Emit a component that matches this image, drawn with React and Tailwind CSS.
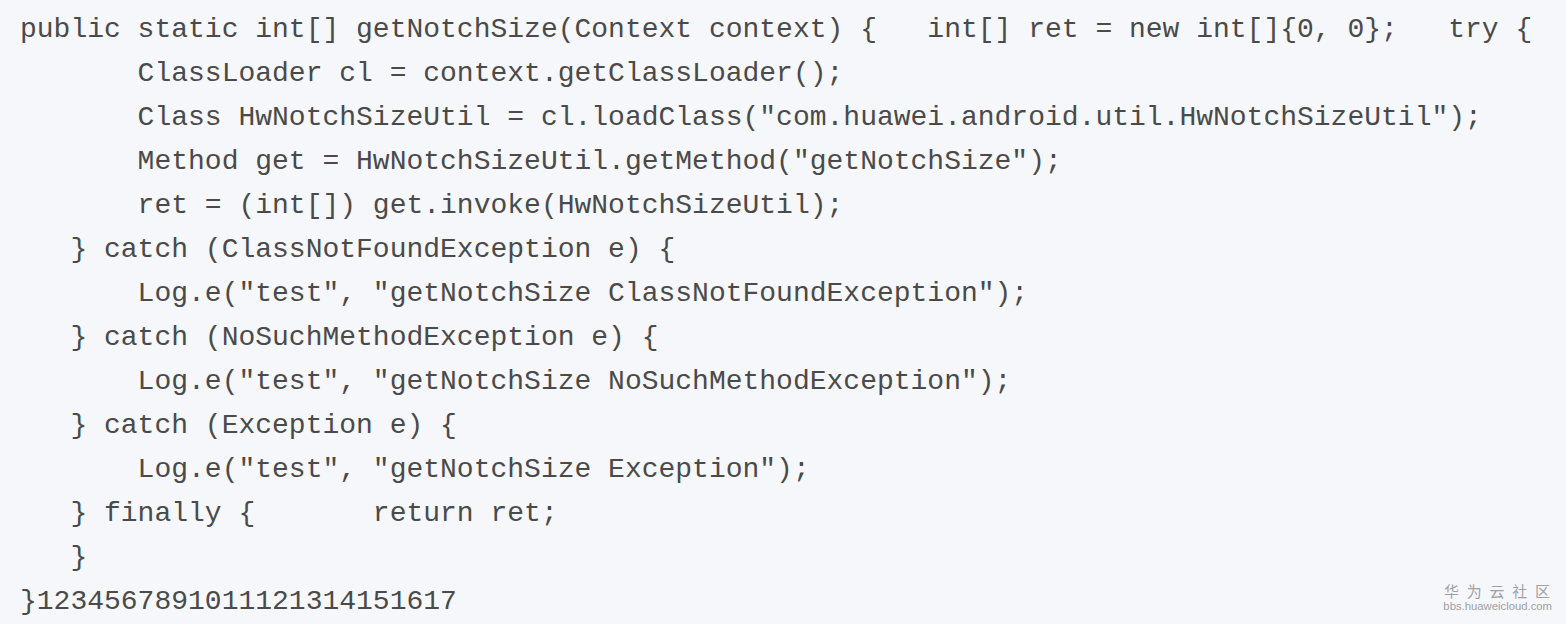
export default function App() {
  const lines = [
    "public static int[] getNotchSize(Context context) {   int[] ret = new int[]{0, 0};   try {",
    "       ClassLoader cl = context.getClassLoader();",
    "       Class HwNotchSizeUtil = cl.loadClass(\"com.huawei.android.util.HwNotchSizeUtil\");",
    "       Method get = HwNotchSizeUtil.getMethod(\"getNotchSize\");",
    "       ret = (int[]) get.invoke(HwNotchSizeUtil);",
    "   } catch (ClassNotFoundException e) {",
    "       Log.e(\"test\", \"getNotchSize ClassNotFoundException\");",
    "   } catch (NoSuchMethodException e) {",
    "       Log.e(\"test\", \"getNotchSize NoSuchMethodException\");",
    "   } catch (Exception e) {",
    "       Log.e(\"test\", \"getNotchSize Exception\");",
    "   } finally {       return ret;",
    "   }",
    "}1234567891011121314151617",
  ];
  return (
    <div className="relative w-[1566px] h-[624px] bg-[#f6f7fb] overflow-hidden">
      <pre className="m-0 pl-[20px] pt-[8px] text-[28px] leading-[44px] text-[#4a4a4a] font-['Courier_New','Nimbus_Mono_PS','FreeMono','Liberation_Mono',monospace]">
        {lines.join("\n")}
      </pre>
      <div className="absolute right-[14px] bottom-[12px] flex flex-col items-end text-[#a0a0a0] font-['Liberation_Sans','Noto_Sans_CJK_SC',sans-serif]">
        <div className="text-[15px] leading-[14px] tracking-[7.75px] mr-[-5.75px]">华为云社区</div>
        <div className="mt-[2px] text-[11.3px] leading-[11px]">bbs.huaweicloud.com</div>
      </div>
    </div>
  );
}
